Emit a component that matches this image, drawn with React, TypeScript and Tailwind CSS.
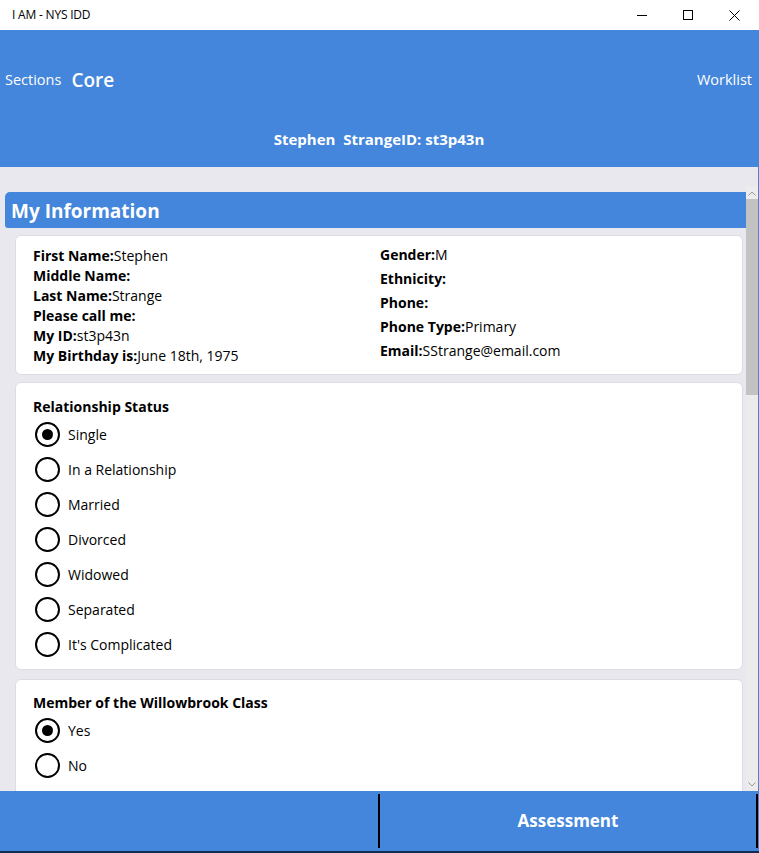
import React from "react";

const BLUE = "bg-[#4386dc]";

function Radio({ label, checked }: { label: string; checked?: boolean }) {
  return (
    <div className="flex items-center h-[35px]">
      <div className="w-[25px] h-[25px] ml-[2px] rounded-full border-[2.5px] border-black flex items-center justify-center">
        {checked && <div className="w-[11px] h-[11px] rounded-full bg-black" />}
      </div>
      <span className="ml-[8px] text-[14px] text-black">{label}</span>
    </div>
  );
}

function Field({ label, value }: { label: string; value?: string }) {
  return (
    <div>
      <span className="font-bold">{label}</span>
      <span>{value ?? ""}</span>
    </div>
  );
}

export default function App() {
  return (
    <div
      className="w-[759px] h-[853px] flex flex-col overflow-hidden bg-white text-black"
      style={{ fontFamily: '"Open Sans", "Noto Sans", sans-serif' }}
    >
      {/* Title bar */}
      <div className="h-[30px] shrink-0 flex items-center bg-white">
        <span className="ml-[12px] text-[12px] tracking-[-0.2px]">I AM - NYS IDD</span>
        <div className="ml-auto flex items-center h-full">
          <div className="w-[46px] h-full flex items-center justify-center">
            <svg width="10" height="10" viewBox="0 0 10 10">
              <path d="M0 5.5H10" stroke="black" strokeWidth="1" />
            </svg>
          </div>
          <div className="w-[46px] h-full flex items-center justify-center">
            <svg width="10" height="10" viewBox="0 0 10 10">
              <rect x="0.5" y="0.5" width="9" height="9" fill="none" stroke="black" strokeWidth="1" />
            </svg>
          </div>
          <div className="w-[46px] h-full flex items-center justify-center mr-[2px]">
            <svg width="11" height="11" viewBox="0 0 11 11">
              <path d="M0.5 0.5L10.5 10.5M10.5 0.5L0.5 10.5" stroke="black" strokeWidth="1" />
            </svg>
          </div>
        </div>
      </div>

      <div className="flex-1 min-h-0 flex flex-col border-r border-[#4386dc]">
        {/* Header */}
        <div className={`h-[137px] shrink-0 ${BLUE} flex flex-col text-white`}>
          <div className="h-[100px] flex items-center">
            <span className="ml-[5px] text-[14.5px]">Sections</span>
            <span className="ml-[10px] text-[19px] font-semibold">Core</span>
            <span className="ml-auto mr-[6px] text-[14.5px]">Worklist</span>
          </div>
          <div className="h-[18px] flex items-center justify-center">
            <span className="text-[15px] font-bold whitespace-pre">Stephen  StrangeID: st3p43n</span>
          </div>
        </div>

        {/* Content */}
        <div className="flex-1 min-h-0 bg-[#e9e8ef] pt-[20px] flex overflow-hidden">
          <div className="flex-1 min-h-0 pl-[5px] pt-[5px] overflow-hidden">
            <div className={`h-[36px] ${BLUE} rounded-tl-[5px] rounded-bl-[3px] flex items-center pt-[3px]`}>
              <span className="ml-[6px] text-[19px] font-bold text-white">My Information</span>
            </div>

            <div className="ml-[10px] mr-[3px] mt-[7px] flex flex-col gap-[7px]">
              {/* Card 1 */}
              <div className="bg-white rounded-[6px] border border-[#dcdce4] h-[140px] flex text-[14px] shrink-0">
                <div className="w-[364px] pl-[17px] pt-[10px] leading-[20px]">
                  <Field label="First Name:" value="Stephen" />
                  <Field label="Middle Name:" />
                  <Field label="Last Name:" value="Strange" />
                  <Field label="Please call me:" />
                  <Field label="My ID:" value="st3p43n" />
                  <Field label="My Birthday is:" value="June 18th, 1975" />
                </div>
                <div className="flex-1 pt-[7px] leading-[24px]">
                  <Field label="Gender:" value="M" />
                  <Field label="Ethnicity:" />
                  <Field label="Phone:" />
                  <Field label="Phone Type:" value="Primary" />
                  <Field label="Email:" value="SStrange@email.com" />
                </div>
              </div>

              {/* Card 2 */}
              <div className="bg-white rounded-[6px] border border-[#dcdce4] h-[288px] pl-[17px] pt-[14px] shrink-0">
                <div className="text-[14px] font-bold leading-[20px]">Relationship Status</div>
                <Radio label="Single" checked />
                <Radio label="In a Relationship" />
                <Radio label="Married" />
                <Radio label="Divorced" />
                <Radio label="Widowed" />
                <Radio label="Separated" />
                <Radio label="It's Complicated" />
              </div>

              {/* Card 3 */}
              <div className="bg-white rounded-[6px] border border-[#dcdce4] h-[200px] pl-[17px] pt-[13px] mt-[2px] shrink-0">
                <div className="text-[14px] font-bold leading-[20px]">Member of the Willowbrook Class</div>
                <Radio label="Yes" checked />
                <Radio label="No" />
              </div>
            </div>
          </div>

          {/* Scrollbar */}
          <div className="w-[12px] flex flex-col bg-[#ebebeb]">
            <div className="h-[12px] flex items-center justify-center bg-[#ececec]">
              <svg width="8" height="5" viewBox="0 0 8 5">
                <path d="M0.5 4.5L4 1L7.5 4.5" fill="none" stroke="#9a9a9a" strokeWidth="1" />
              </svg>
            </div>
            <div className="h-[196px] bg-[#c2c2c2]" />
            <div className="flex-1" />
            <div className="h-[14px] flex items-center justify-center">
              <svg width="8" height="5" viewBox="0 0 8 5">
                <path d="M0.5 0.5L4 4L7.5 0.5" fill="none" stroke="#9a9a9a" strokeWidth="1" />
              </svg>
            </div>
          </div>
        </div>

        {/* Footer */}
        <div className={`h-[60px] shrink-0 ${BLUE} flex items-center`}>
          <div className="w-[378px] h-full" />
          <div className="w-[2px] h-[54px] bg-black" />
          <div className="flex-1 h-full flex items-center justify-center">
            <span className="text-[17px] font-bold text-white">Assessment</span>
          </div>
          <div className="w-[2px] h-[54px] bg-black" />
        </div>
      </div>
      <div className="h-[2px] shrink-0 bg-[#0d2c4f]" />
    </div>
  );
}
